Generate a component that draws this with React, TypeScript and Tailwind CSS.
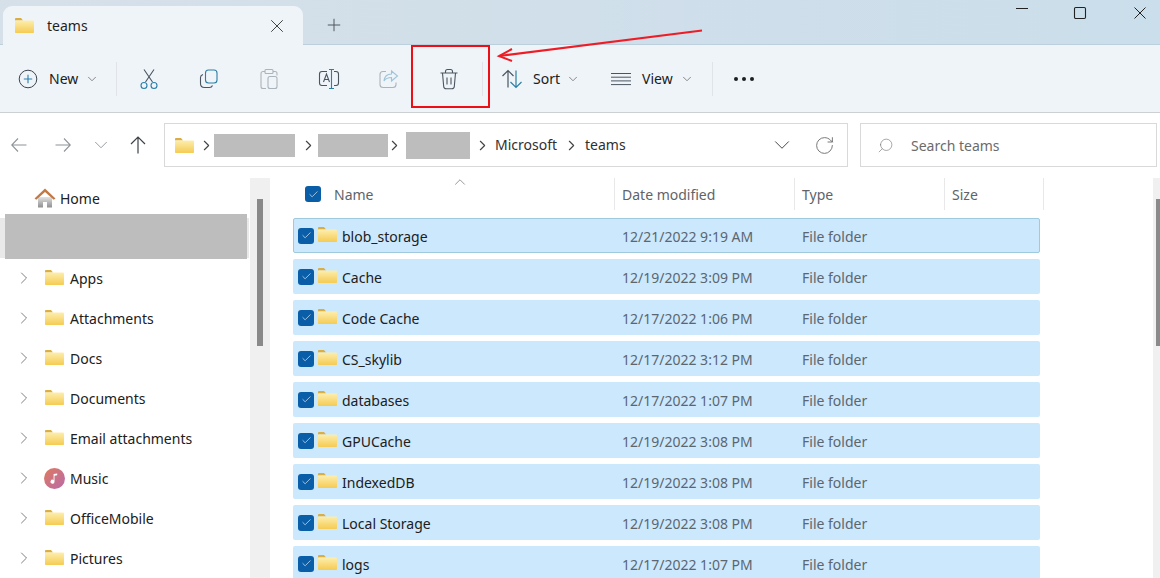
import { ChevronDown, ChevronRight, ChevronUp, RotateCw, Search, X, Plus, Check } from "lucide-react";

const rows = [
  ["blob_storage", "12/21/2022 9:19 AM"],
  ["Cache", "12/19/2022 3:09 PM"],
  ["Code Cache", "12/17/2022 1:06 PM"],
  ["CS_skylib", "12/17/2022 3:12 PM"],
  ["databases", "12/17/2022 1:07 PM"],
  ["GPUCache", "12/19/2022 3:08 PM"],
  ["IndexedDB", "12/19/2022 3:08 PM"],
  ["Local Storage", "12/19/2022 3:08 PM"],
  ["logs", "12/17/2022 1:07 PM"],
];

const sideItems = ["Apps", "Attachments", "Docs", "Documents", "Email attachments", "Music", "OfficeMobile", "Pictures"];

function Folder({ className = "" }: { className?: string }) {
  return (
    <svg viewBox="0 0 19 15" className={`w-[19px] h-[15px] shrink-0 ${className}`}>
      <defs>
        <linearGradient id="folderBody" x1="0" y1="0" x2="0" y2="1">
          <stop offset="0" stopColor="#fdeeae" />
          <stop offset="1" stopColor="#f5cb52" />
        </linearGradient>
      </defs>
      <path d="M0 1.200C0 .5.500 0 1.200 0h4.800l2 2.500H0z" fill="#d8ae45" />
      <rect x="0" y="2.500" width="19" height="12.500" rx=".8" fill="url(#folderBody)" />
    </svg>
  );
}

function CheckBox() {
  return (
    <span className="w-[16px] h-[16px] rounded-[3px] bg-[#0a5ea8] flex items-center justify-center shrink-0">
      <Check size={11} strokeWidth={1.5} className="text-[#dcecf9]" />
    </span>
  );
}

function ToolIcon({ children, disabled = false }: { children: React.ReactNode; disabled?: boolean }) {
  return (
    <div className={`w-[60px] flex items-center justify-center ${disabled ? "opacity-40" : ""}`}>
      <svg viewBox="0 0 22 22" className="w-[22px] h-[22px]" fill="none" stroke="#4a5560" strokeWidth="1.1">
        {children}
      </svg>
    </div>
  );
}

function Sep({ className = "" }: { className?: string }) {
  return <div className={`w-px h-[34px] bg-[#e0e4e8] shrink-0 ${className}`} />;
}

function Crumb({ className = "" }: { className?: string }) {
  return (
    <span className={`w-[13px] flex justify-center shrink-0 ${className}`}>
      <ChevronRight size={17} strokeWidth={1.6} className="text-[#444] shrink-0" />
    </span>
  );
}

export default function App() {
  return (
    <div
      className="relative w-[1160px] h-[578px] overflow-hidden bg-white text-[14px] text-[#202020] flex flex-col"
      style={{ fontFamily: '"Noto Sans", "Open Sans", sans-serif' }}
    >
      {/* title bar */}
      <div className="h-[45px] shrink-0 bg-gradient-to-r from-[#d6e0e9] to-[#cadeeb] border-b border-[#bccfdc] flex items-end pl-[3px]">
        <div className="w-[300px] h-[39px] -mb-px bg-[#eff4f9] rounded-t-[9px] flex items-center pl-[12px] pr-[15px]">
          <Folder />
          <span className="ml-[13px] flex-1 text-[#1f1f1f]">teams</span>
          <X size={22} strokeWidth={1} className="text-[#333]" />
        </div>
        <div className="h-[39px] flex items-center ml-[21px]">
          <Plus size={20} strokeWidth={1.2} className="text-[#50585e]" />
        </div>
        <div className="flex-1 self-start flex justify-end pt-[6px] pr-[13px]">
          <svg viewBox="0 0 14 14" className="w-[14px] h-[14px]" fill="none" stroke="#222"><path d="M1 2.500h12" strokeWidth="1" /></svg>
          <svg viewBox="0 0 14 14" className="ml-[44px] w-[14px] h-[14px]" fill="none" stroke="#222"><rect x="1.500" y="1.500" width="11" height="11" rx="1.200" strokeWidth="1.100" /></svg>
          <svg viewBox="0 0 14 14" className="ml-[46px] w-[14px] h-[14px]" fill="none" stroke="#222"><path d="M1.500 1.500l11 11M12.500 1.500l-11 11" strokeWidth="1" /></svg>
        </div>
      </div>

      {/* toolbar */}
      <div className="h-[68px] shrink-0 bg-[#eff4f9] border-b border-[#cdd0d3] flex items-center pl-[18px]">
        <svg viewBox="0 0 20 20" className="w-[20px] h-[20px] shrink-0" fill="none" stroke="#3d4650" strokeWidth="1">
          <circle cx="10" cy="10" r="8.800" />
          <path d="M10 5.800v8.400M5.800 10h8.400" stroke="#2a7fb0" strokeWidth="1.100" />
        </svg>
        <span className="ml-[11px] w-[32px]">New</span>
        <ChevronDown size={14} strokeWidth={1.3} className="ml-[4px] text-[#666]" />
        <Sep className="ml-[17px] mr-[2px]" />
        <ToolIcon>
          <path d="M6 1.500l8.500 12.500M16 1.500L7.500 14" />
          <circle cx="6" cy="17.500" r="3" stroke="#2a7fa5" />
          <circle cx="16" cy="17.500" r="3" stroke="#2a7fa5" />
        </ToolIcon>
        <ToolIcon>
          <rect x="7.500" y="2" width="11.500" height="13" rx="3" stroke="#2a7fa5" />
          <path d="M5 6.500C3.500 7 2.500 8 2.500 9.500v6c0 2.500 1.500 4 4 4h5c1.500 0 2.500-.8 3-2" />
        </ToolIcon>
        <ToolIcon disabled>
          <path d="M7 3.500H5a2 2 0 0 0-2 2v13a2 2 0 0 0 2 2h3M15 3.500h2a2 2 0 0 1 2 2v2" />
          <rect x="7" y="1.500" width="8" height="4" rx="1" />
          <rect x="10" y="8.500" width="9" height="12" rx="2" />
        </ToolIcon>
        <ToolIcon>
          <path d="M9 3.500H4a2.500 2.500 0 0 0-2.500 2.500v9A2.500 2.500 0 0 0 4 17.500h5M16 3.500h2a2.500 2.500 0 0 1 2.500 2.500v9a2.500 2.500 0 0 1-2.500 2.500h-2" />
          <path d="M5.500 14l3-8 3 8M6.500 11.500h4" />
          <path d="M11 1.500h5M11 20.500h5M13.500 1.500v19" stroke="#2a7fa5" />
        </ToolIcon>
        <ToolIcon disabled>
          <path d="M8 3.500H5a3 3 0 0 0-3 3v10a3 3 0 0 0 3 3h10a3 3 0 0 0 3-3v-2" />
          <path d="M13.500 3v3c-4 0-7 2-7.500 7 2-3 4-3.500 7.500-3.500V13l6-5z" stroke="#2a7fa5" />
        </ToolIcon>
        <ToolIcon>
          <path d="M2.500 5h17M7.500 5V3.500A2 2 0 0 1 9.500 1.500h3a2 2 0 0 1 2 2V5" />
          <path d="M4.500 5l1.200 13.500a2.500 2.500 0 0 0 2.500 2.300h5.600a2.500 2.500 0 0 0 2.500-2.300L17.500 5" />
          <path d="M9 9.500v7M13 9.500v7" />
        </ToolIcon>
        <Sep className="ml-[3px]" />
        <svg viewBox="0 0 22 20" className="ml-[18px] w-[22px] h-[20px] shrink-0" fill="none" strokeWidth="1.200">
          <path d="M7 18.500V1.500M1.500 7L7 1.500 12.500 7" stroke="#4a5560" />
          <path d="M15 1.500v17M9.500 13l5.500 5.500 5.500-5.500" stroke="#2a7fa5" />
        </svg>
        <span className="ml-[10px] w-[29px]">Sort</span>
        <ChevronDown size={14} strokeWidth={1.3} className="ml-[4px] text-[#666]" />
        <svg viewBox="0 0 20 14" className="ml-[31px] w-[20px] h-[14px] shrink-0" fill="none" stroke="#4a5560" strokeWidth="1">
          <path d="M0 1.500h20M0 5.200h20M0 8.900h20M0 12.600h20" />
        </svg>
        <span className="ml-[11px] w-[33px]">View</span>
        <ChevronDown size={14} strokeWidth={1.3} className="ml-[5px] text-[#666]" />
        <Sep className="ml-[18px]" />
        <div className="ml-[21px] flex gap-[4px]">
          <span className="w-[4px] h-[4px] rounded-full bg-[#1e1e1e]" />
          <span className="w-[4px] h-[4px] rounded-full bg-[#1e1e1e]" />
          <span className="w-[4px] h-[4px] rounded-full bg-[#1e1e1e]" />
        </div>
      </div>

      {/* address row */}
      <div className="h-[65px] shrink-0 flex items-center pl-[11px] pr-[3px] pb-[1px]">
        <svg viewBox="0 0 16 16" className="w-[16px] h-[16px] text-[#8d9499] shrink-0" fill="none" stroke="currentColor" strokeWidth="1.100"><path d="M15.500 8H.7M7 1.500L.7 8 7 14.500" /></svg>
        <svg viewBox="0 0 16 16" className="ml-[28px] w-[16px] h-[16px] text-[#8d9499] shrink-0" fill="none" stroke="currentColor" strokeWidth="1.100"><path d="M.5 8h14.800M9 1.500L15.300 8 9 14.500" /></svg>
        <ChevronDown size={22} strokeWidth={1} className="ml-[19px] text-[#8d9499] shrink-0" />
        <svg viewBox="0 0 16 18" className="ml-[18px] w-[16px] h-[18px] text-[#3c4248] shrink-0" fill="none" stroke="currentColor" strokeWidth="1.200"><path d="M8 17.500V1M1 8l7-7 7 7" /></svg>
        <div className="ml-[18px] w-[684px] h-[44px] border border-[#d9d9d9] flex items-center pl-[10px] pr-[12px] shrink-0">
          <Folder />
          <Crumb className="ml-[6px]" />
          <div className="ml-[1px] w-[81px] h-[23px] bg-[#bdbdbd]" />
          <Crumb className="ml-[7px]" />
          <div className="ml-[3px] w-[70px] h-[23px] bg-[#bdbdbd]" />
          <Crumb />
          <div className="ml-[5px] w-[64px] h-[27px] bg-[#bdbdbd]" />
          <Crumb className="ml-[6px]" />
          <span className="ml-[6px] -mt-[2px] text-[#303030]">Microsoft</span>
          <Crumb className="ml-[8px]" />
          <span className="ml-[7px] -mt-[2px] text-[#303030]">teams</span>
          <ChevronDown size={26} strokeWidth={0.9} className="ml-auto mr-[19px] text-[#444]" />
          <RotateCw size={21} strokeWidth={1} className="text-[#666]" />
        </div>
        <div className="ml-[12px] flex-1 h-[44px] border border-[#d9d9d9] flex items-center pl-[16px] text-[#6b6b6b]">
          <Search size={17} strokeWidth={0.9} className="-scale-x-100 text-[#777]" />
          <span className="ml-[17px]">Search teams</span>
        </div>
      </div>

      {/* body */}
      <div className="flex-1 flex min-h-0">
        {/* nav pane */}
        <div className="w-[250px] shrink-0 flex flex-col">
          <div className="h-[36px] shrink-0 flex items-center pl-[34px] pt-[4px]">
            <svg viewBox="0 0 22 20" className="w-[22px] h-[20px] shrink-0">
              <defs>
                <linearGradient id="homeBody" x1="0" y1="0" x2="0" y2="1">
                  <stop offset="0" stopColor="#e2e2e2" />
                  <stop offset="1" stopColor="#8f8f8f" />
                </linearGradient>
              </defs>
              <path d="M4 9h14v10.500h-5V14H9v5.500H4z" fill="url(#homeBody)" />
              <path d="M.5 10.500L11 .5l10.500 10-1.800 1.200L11 4 2.300 11.700z" fill="#c27a45" />
            </svg>
            <span className="ml-[4px]">Home</span>
          </div>
          <div className="h-[45px] shrink-0 relative">
            <div className="absolute left-0 right-[1px] top-[4px] bottom-[1px] bg-[#e9e9e9]" />
            <div className="absolute left-[5px] right-[3px] inset-y-0 bg-[#bdbdbd]" />
          </div>
          <div className="-mt-px">
            {sideItems.map((name) => (
              <div key={name} className="h-[40px] flex items-center pl-[14px]">
                <ChevronRight size={20} strokeWidth={1} className="text-[#666] shrink-0" />
                {name === "Music" ? (
                  <span className="ml-[10px] mr-[5px] w-[21px] h-[21px] rounded-full bg-gradient-to-br from-[#e0785a] to-[#b86aa8] flex items-center justify-center shrink-0">
                    <svg viewBox="0 0 10 12" className="w-[9px] h-[11px]" fill="#fff"><path d="M4 1l4-.5v2L5 3v6.500a2.200 2.200 0 1 1-1-1.800z" /></svg>
                  </span>
                ) : (
                  <Folder className="ml-[11px] mr-[6px] -mt-[2px]" />
                )}
                <span>{name}</span>
              </div>
            ))}
          </div>
        </div>
        <div className="w-[20px] shrink-0 bg-[#f0f0f0] pt-[21px] flex justify-center">
          <div className="w-[6px] h-[147px] bg-[#8a8a8a]" />
        </div>

        {/* file list */}
        <div className="flex-1 min-w-0 pl-[23px] relative">
          <div className="w-[751px] h-[40px] flex items-start text-[#5e6469]">
            <div className="relative w-[321px] h-[32px] flex items-center pl-[12px] shrink-0">
              <CheckBox />
              <span className="ml-[13px]">Name</span>
              <ChevronUp size={18} strokeWidth={0.9} className="absolute left-[158px] top-[-5px] text-[#666]" />
            </div>
            <div className="w-[180px] h-[32px] border-l border-[#e8e8e8] pl-[7px] flex items-center shrink-0">Date modified</div>
            <div className="w-[150px] h-[32px] border-l border-[#e8e8e8] pl-[7px] flex items-center shrink-0">Type</div>
            <div className="w-[100px] h-[32px] border-x border-[#e8e8e8] pl-[7px] flex items-center shrink-0">Size</div>
          </div>
          <div className="flex flex-col gap-[6px]">
            {rows.map(([name, date], i) => (
              <div
                key={name}
                className={`w-[747px] h-[35px] shrink-0 bg-[#cce8fd] flex items-center pl-[4px] rounded-[2px] border ${
                  i === 0 ? "border-[#9fc9dc]" : "border-transparent"
                }`}
              >
                <CheckBox />
                <Folder className="ml-[4px] -mt-[3px]" />
                <span className="ml-[5px] pt-[2px] w-[280px] shrink-0">{name}</span>
                <span className="pt-[2px] w-[180px] shrink-0 text-[#5b6670]">{date}</span>
                <span className="pt-[2px] text-[#5b6670]">File folder</span>
              </div>
            ))}
          </div>
          <div className="absolute right-0 top-0 bottom-0 w-[7px] bg-[#f0f0f0]">
            <div className="mt-[21px] ml-[3px] w-[4px] h-[147px] bg-[#8a8a8a]" />
          </div>
        </div>
      </div>

      {/* red annotation */}
      <div className="absolute left-[411px] top-[45px] w-[79px] h-[63px] border-2 border-[#ee0f16]" />
      <svg className="absolute left-[495px] top-[25px] w-[210px] h-[40px]" viewBox="0 0 210 40" fill="none" stroke="#ee1c25" strokeWidth="2">
        <path d="M207 5.500L4 31" />
        <path d="M17 24L4 31l13 5" />
      </svg>
    </div>
  );
}
